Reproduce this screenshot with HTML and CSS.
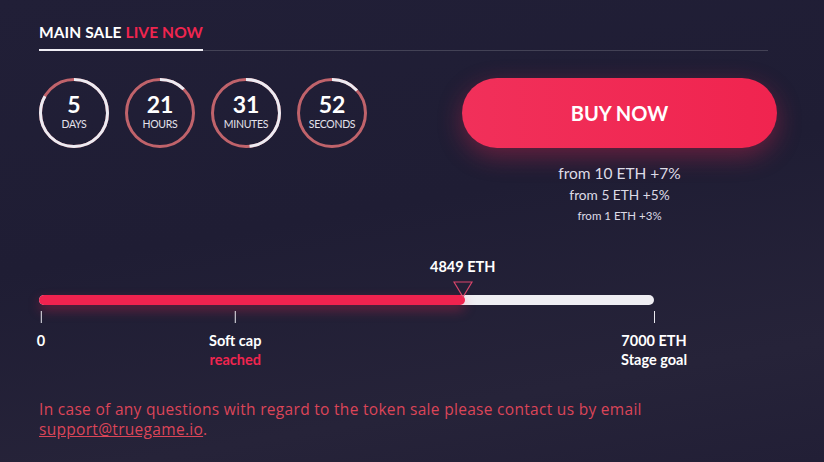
FILE: index.html
```html
<!DOCTYPE html>
<html lang="en">
<head>
    <meta charset="UTF-8">
    <meta name="viewport" content="width=device-width, initial-scale=1.0">
    <title>Main sale</title>
    <link rel="stylesheet" href="styles.css">
</head>
<body>
    <div class="sale">
        <div class="saleTitle">
            <h2 class="saleHeading">MAIN SALE <span class="live">LIVE NOW</span></h2>
        </div>

        <div class="saleTop">
            <div class="timers">
                <div class="timer" style="--p: 83.3">
                    <svg class="ring" viewBox="0 0 70 70"><circle class="ringBg" cx="35" cy="35" r="33.5" pathLength="100"/><circle class="ringFg" cx="35" cy="35" r="33.5" pathLength="100"/></svg>
                    <span class="timerNum">5</span>
                    <span class="timerLabel">DAYS</span>
                </div>
                <div class="timer" style="--p: 12.5">
                    <svg class="ring" viewBox="0 0 70 70"><circle class="ringBg" cx="35" cy="35" r="33.5" pathLength="100"/><circle class="ringFg" cx="35" cy="35" r="33.5" pathLength="100"/></svg>
                    <span class="timerNum">21</span>
                    <span class="timerLabel">HOURS</span>
                </div>
                <div class="timer" style="--p: 48.3">
                    <svg class="ring" viewBox="0 0 70 70"><circle class="ringBg" cx="35" cy="35" r="33.5" pathLength="100"/><circle class="ringFg" cx="35" cy="35" r="33.5" pathLength="100"/></svg>
                    <span class="timerNum">31</span>
                    <span class="timerLabel">MINUTES</span>
                </div>
                <div class="timer" style="--p: 13.3">
                    <svg class="ring" viewBox="0 0 70 70"><circle class="ringBg" cx="35" cy="35" r="33.5" pathLength="100"/><circle class="ringFg" cx="35" cy="35" r="33.5" pathLength="100"/></svg>
                    <span class="timerNum">52</span>
                    <span class="timerLabel">SECONDS</span>
                </div>
            </div>

            <div class="buySide">
                <button class="btnBuy">BUY NOW</button>
                <div class="bonus bonusBig">from 10 ETH +7%</div>
                <div class="bonus bonusMid">from 5 ETH +5%</div>
                <div class="bonus bonusSmall">from 1 ETH +3%</div>
            </div>
        </div>

        <div class="progress">
            <div class="progressHead">
                <span class="current" style="left: 68.9%">4849 ETH</span>
                <svg class="marker" style="left: 68.9%" width="20" height="17" viewBox="0 0 20 17"><path d="M1 1 H19 L10 16 Z" fill="none" stroke="#d9456a" stroke-width="1.2"/></svg>
            </div>
            <div class="bar">
                <div class="barFill" style="width: 69.3%"></div>
            </div>
            <div class="scale">
                <div class="mark" style="left: 0.3%">
                    <span class="tick"></span>
                    <span class="markText">0</span>
                </div>
                <div class="mark" style="left: 31.9%">
                    <span class="tick"></span>
                    <span class="markText">Soft cap</span>
                    <span class="markText red">reached</span>
                </div>
                <div class="mark" style="left: 100%">
                    <span class="tick"></span>
                    <span class="markText">7000 ETH</span>
                    <span class="markText">Stage goal</span>
                </div>
            </div>
        </div>

        <p class="contact">In case of any questions with regard to the token sale please contact us by email <a href="#">support@truegame.io</a>.</p>
    </div>
</body>
</html>
```

FILE: styles.css
```css
* {
    margin: 0;
    padding: 0;
    box-sizing: border-box;
}
body {
    font-family: Lato, 'Noto Sans', sans-serif;
    color: #fff;
    background: linear-gradient(170deg, #211f37 0%, #1f1d34 45%, #262339 80%, #221f36 100%);
    height: 462px;
    overflow: hidden;
}
.sale {
    padding: 22px 47px 0 39px;
}

.saleTitle {
    margin-right: 9px;
    border-bottom: 1px solid rgba(255, 255, 255, 0.16);
}
.saleHeading {
    display: inline-block;
    font-size: 15.5px;
    font-weight: 700;
    line-height: 18px;
    padding-bottom: 8px;
    margin-bottom: -1px;
    border-bottom: 2px solid #f0eef5;
    letter-spacing: 0.1px;
}
.live {
    color: #f0254f;
}

.saleTop {
    display: flex;
    justify-content: space-between;
    margin-top: 27px;
}
.timers {
    display: flex;
    gap: 16px;
}
.timer {
    position: relative;
    width: 70px;
    height: 70px;
    display: flex;
    flex-direction: column;
    align-items: center;
    justify-content: center;
}
.ring {
    position: absolute;
    top: 0;
    left: 0;
    width: 70px;
    height: 70px;
    transform: rotate(-90deg);
}
.ring circle {
    fill: none;
    stroke-width: 3;
}
.ringBg {
    stroke: #c0636b;
}
.ringFg {
    stroke: #ecebf2;
    stroke-dasharray: var(--p) 100;
}
.timerNum {
    font-size: 23px;
    font-weight: 700;
    line-height: 22px;
    margin-top: -3px;
}
.timerLabel {
    font-size: 10.5px;
    line-height: 12px;
    margin-top: 3px;
    color: #e4e2ec;
    letter-spacing: -0.3px;
}

.buySide {
    width: 315px;
    display: flex;
    flex-direction: column;
    align-items: center;
}
.btnBuy {
    width: 315px;
    height: 70px;
    border: none;
    outline: none;
    border-radius: 35px;
    background: linear-gradient(90deg, #f1305a 0%, #f0244f 100%);
    box-shadow: 0 8px 24px rgba(240, 36, 80, 0.35);
    color: #fff;
    font-family: Lato, sans-serif;
    font-size: 20px;
    font-weight: 700;
    cursor: pointer;
    margin-bottom: 15px;
}
.bonus {
    color: #dddbe6;
    line-height: 21px;
}
.bonusBig {
    font-size: 15.5px;
}
.bonusMid {
    font-size: 13.7px;
}
.bonusSmall {
    font-size: 11.5px;
}

.progress {
    width: 615px;
    margin-top: 29px;
}
.progressHead {
    position: relative;
    height: 40px;
}
.current {
    position: absolute;
    top: 3px;
    transform: translateX(-50%);
    font-size: 14.5px;
    font-weight: 700;
    line-height: 18px;
    white-space: nowrap;
}
.marker {
    position: absolute;
    top: 26px;
    transform: translateX(-50%);
}
.bar {
    height: 10px;
    border-radius: 5px;
    background: #efeef3;
}
.barFill {
    height: 10px;
    border-radius: 5px;
    background: #f0234f;
    box-shadow: 0 5px 12px rgba(240, 36, 80, 0.35);
}
.scale {
    position: relative;
    height: 64px;
}
.mark {
    position: absolute;
    top: 0;
    transform: translateX(-50%);
    display: flex;
    flex-direction: column;
    align-items: center;
}
.tick {
    display: block;
    width: 1px;
    height: 12px;
    margin-top: 6px;
    margin-bottom: 8px;
    background: #e9e8ee;
}
.markText {
    font-size: 14.5px;
    font-weight: 700;
    line-height: 19px;
    white-space: nowrap;
}
.red {
    color: #f0254f;
}

.contact {
    font-family: 'Open Sans', sans-serif;
    font-size: 15.5px;
    line-height: 20px;
    color: #dc4558;
    margin-top: 30px;
    letter-spacing: 0.3px;
    max-width: 680px;
}
.contact a {
    color: #dc4558;
}
```
